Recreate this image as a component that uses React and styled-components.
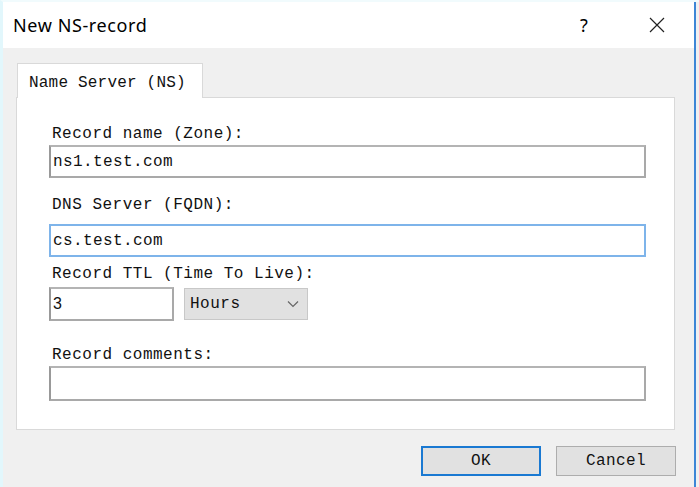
import React from 'react';
import styled, { createGlobalStyle } from 'styled-components';

const GlobalStyle = createGlobalStyle`
  html, body {
    margin: 0;
    padding: 0;
    background: #ffffff;
  }
  * {
    box-sizing: border-box;
  }
`;

const MONO = `"Liberation Mono", "DejaVu Sans Mono", monospace`;

const Window = styled.div`
  width: 699px;
  height: 487px;
  display: flex;
  flex-direction: column;
  border-left: 3px solid #e2f7fc;
  border-top: 2px solid #f1fbfd;
  background: #f0f0f0;
`;

const Inner = styled.div`
  flex: 1;
  display: flex;
  flex-direction: column;
  width: 693px;
  border-right: 2px solid #3d86d6;
`;

const TitleBar = styled.div`
  height: 46px;
  background: #ffffff;
  display: flex;
  align-items: center;
  padding-left: 10px;
  font-family: "Noto Sans", "Open Sans", sans-serif;
  color: #000;
`;

const Title = styled.div`
  flex: 1;
  font-size: 18px;
  letter-spacing: 0.6px;
  margin-top: -1px;
`;

const TitleButton = styled.div`
  width: 42px;
  height: 30px;
  display: flex;
  align-items: center;
  justify-content: center;
  font-size: 18px;
  margin-right: ${p => p.gap || 0}px;
`;

const Body = styled.div`
  flex: 1;
  display: flex;
  flex-direction: column;
  padding: 15px 19px 0 13px;
`;

const TabStrip = styled.div`
  display: flex;
  height: 35px;
  margin-bottom: -1px;
  position: relative;
  z-index: 1;
`;

const Tab = styled.div`
  width: 186px;
  margin-left: 1px;
  background: #ffffff;
  border: 1px solid #d9d9d9;
  border-bottom: none;
  display: flex;
  align-items: center;
  padding: 3px 0 0 11px;
  font-family: ${MONO};
  font-size: 16px;
  letter-spacing: 0.2px;
  color: #111;
`;

const Panel = styled.div`
  height: 333px;
  background: #ffffff;
  border: 1px solid #d9d9d9;
  padding: 28px 28px 0 32px;
  display: flex;
  flex-direction: column;
`;

const Label = styled.div`
  height: 16px;
  line-height: 16px;
  padding-left: 3px;
  font-family: ${MONO};
  font-size: 16px;
  letter-spacing: 0.5px;
  color: #111;
  margin-top: ${p => p.top || 0}px;
  margin-bottom: ${p => p.gap || 0}px;
`;

const TextBox = styled.div`
  width: ${p => p.w || 597}px;
  height: ${p => p.h || 33}px;
  border: ${p => (p.focused ? '2px solid #7eb4ea' : '2px solid #a9a9a9')};
  border-top-color: ${p => (p.focused ? '#7eb4ea' : '#b4b4b4')};
  border-left-color: ${p => (p.focused ? '#7eb4ea' : '#999')};
  background: #ffffff;
  display: flex;
  align-items: center;
  padding-left: 2px;
  font-family: ${p => (p.sans ? '"Liberation Sans", sans-serif' : MONO)};
  font-size: 16px;
  letter-spacing: ${p => (p.sans ? 0 : 0.4)}px;
  color: #111;
`;

const Row = styled.div`
  display: flex;
  align-items: center;
  gap: 10px;
`;

const Select = styled.div`
  width: 124px;
  height: 32px;
  background: #e1e1e1;
  border: 1px solid #c8c8c8;
  display: flex;
  align-items: center;
  justify-content: space-between;
  padding: 0 8px 0 5px;
  font-family: ${MONO};
  font-size: 16px;
  letter-spacing: 0.5px;
  color: #111;
`;

const Footer = styled.div`
  flex: 1;
  display: flex;
  justify-content: flex-end;
  align-items: flex-start;
  gap: 15px;
  padding-top: 16px;
  margin-right: -1px;
`;

const Button = styled.div`
  width: 120px;
  height: 30px;
  background: #e1e1e1;
  border: ${p => (p.primary ? '2px solid #1a79d2' : '1px solid #adadad')};
  display: flex;
  align-items: center;
  justify-content: center;
  font-family: ${MONO};
  font-size: 16px;
  letter-spacing: 0.4px;
  color: #111;
`;

const CloseIcon = () => (
  <svg width="16" height="16" viewBox="0 0 16 16">
    <path d="M1 1 L15 15 M15 1 L1 15" stroke="#222" strokeWidth="1.2" fill="none" />
  </svg>
);

const Chevron = () => (
  <svg width="12" height="8" viewBox="0 0 12 8">
    <path d="M1 1.5 L6 6.5 L11 1.5" stroke="#666" strokeWidth="1.2" fill="none" />
  </svg>
);

export default function App() {
  return (
    <>
      <GlobalStyle />
      <Window>
        <Inner>
          <TitleBar>
            <Title>New NS-record</Title>
            <TitleButton gap={31}>?</TitleButton>
            <TitleButton gap={16}>
              <CloseIcon />
            </TitleButton>
          </TitleBar>
          <Body>
            <TabStrip>
              <Tab>Name Server (NS)</Tab>
            </TabStrip>
            <Panel>
              <Label gap={3}>Record name (Zone):</Label>
              <TextBox>ns1.test.com</TextBox>
              <Label top={19} gap={11}>DNS Server (FQDN):</Label>
              <TextBox focused>cs.test.com</TextBox>
              <Label top={9} gap={5}>Record TTL (Time To Live):</Label>
              <Row>
                <TextBox w={125} h={34} sans>3</TextBox>
                <Select>
                  <span>Hours</span>
                  <Chevron />
                </Select>
              </Row>
              <Label top={26} gap={3}>Record comments:</Label>
              <TextBox h={35} />
            </Panel>
            <Footer>
              <Button primary>OK</Button>
              <Button>Cancel</Button>
            </Footer>
          </Body>
        </Inner>
      </Window>
    </>
  );
}
